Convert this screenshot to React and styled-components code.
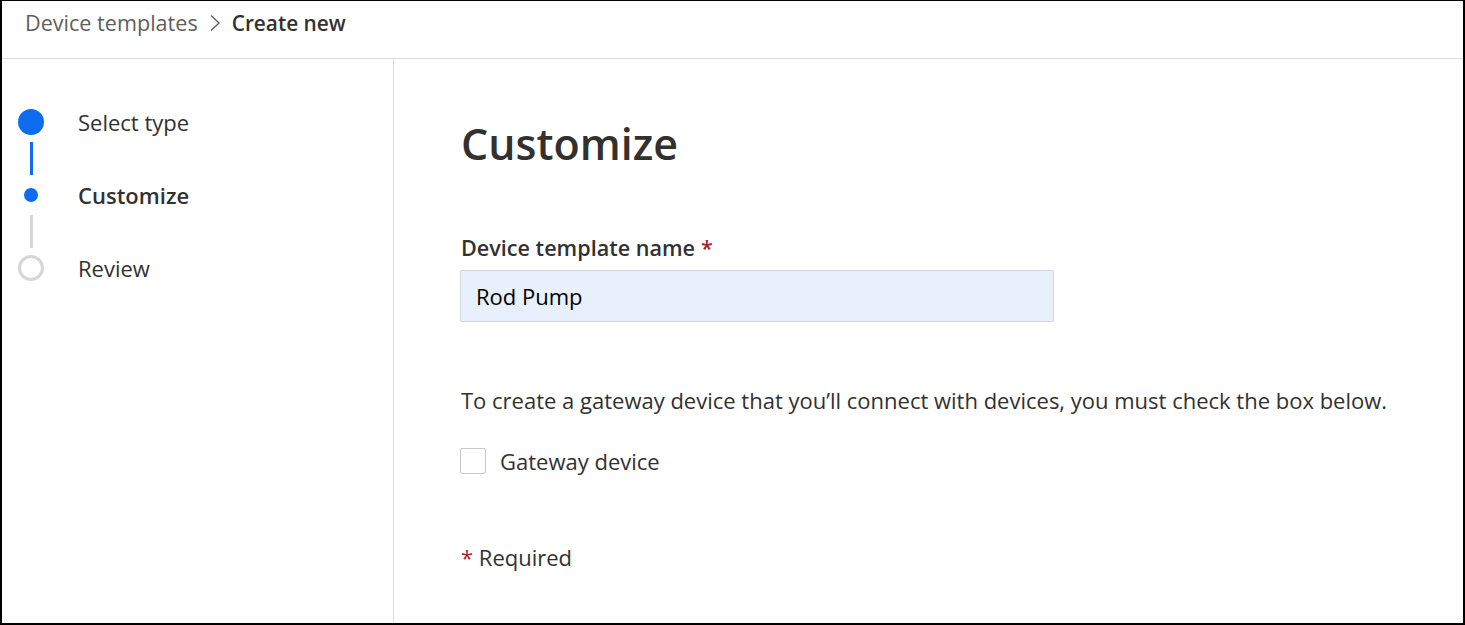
import React from 'react';
import styled, { createGlobalStyle } from 'styled-components';

const GlobalStyle = createGlobalStyle`
  html, body {
    margin: 0;
    padding: 0;
    background: #fff;
  }
  body {
    font-family: 'Open Sans', 'Noto Sans', sans-serif;
    color: #323130;
  }
`;

const Frame = styled.div`
  box-sizing: border-box;
  width: 1465px;
  height: 625px;
  border-style: solid;
  border-color: #000;
  border-width: 1px 2px 2px 2px;
  display: flex;
  flex-direction: column;
  overflow: hidden;
`;

const Header = styled.header`
  height: 57px;
  flex: none;
  display: flex;
  align-items: center;
  padding-left: 23px;
  border-bottom: 1px solid #dcdcdc;
  gap: 11px;
`;

const Crumb = styled.span`
  color: ${p => (p.current ? '#323130' : '#605e5c')};
  font-weight: ${p => (p.current ? 600 : 400)};
  font-size: ${p => (p.current ? '20.8px' : '21.6px')};
  margin-top: -14px;
`;

const Chevron = styled.svg`
  width: 12px;
  height: 18px;
  margin-top: -14px;
`;

const Body = styled.div`
  flex: 1;
  display: flex;
`;

const Sidebar = styled.nav`
  width: 392px;
  flex: none;
  border-right: 1px solid #dcdcdc;
  padding-top: 50px;
  box-sizing: border-box;
`;

const Step = styled.div`
  display: flex;
  align-items: center;
  height: 26px;
`;

const DotCell = styled.div`
  width: 26px;
  height: 26px;
  margin-left: 16px;
  display: flex;
  align-items: center;
  justify-content: center;
`;

const Dot = styled.div`
  box-sizing: border-box;
  border-radius: 50%;
  width: ${p => (p.size === 'small' ? '14px' : '26px')};
  height: ${p => (p.size === 'small' ? '14px' : '26px')};
  background: ${p => (p.hollow ? 'transparent' : '#0f6cf0')};
  border: ${p => (p.hollow ? '3px solid #d6d6d6' : 'none')};
`;

const StepLabel = styled.span`
  margin-left: 34px;
  font-size: 22px;
  font-weight: ${p => (p.active ? 600 : 400)};
  color: #323130;
`;

const Connector = styled.div`
  width: 3px;
  height: 33px;
  margin: 7px 0 7px 28px;
  background: ${p => (p.done ? '#0f6cf0' : '#d6d6d6')};
`;

const Main = styled.main`
  flex: 1;
  padding: 55px 0 0 67px;
`;

const Title = styled.h1`
  margin: 0;
  font-size: 43px;
  font-weight: 600;
  line-height: 60px;
  color: #323130;
`;

const Label = styled.label`
  display: block;
  margin-top: 61px;
  font-size: 21.6px;
  font-weight: 600;
  line-height: 26px;
`;

const Star = styled.span`
  color: #a4262c;
  margin-left: ${p => p.gap || '0px'};
`;

const Input = styled.input`
  display: block;
  box-sizing: border-box;
  margin: 9px 0 0 -1px;
  width: 594px;
  height: 52px;
  padding: 0 15px;
  background: #e8f0fe;
  border: 1px solid #d2d6dc;
  border-radius: 2px;
  font-family: inherit;
  font-size: 22px;
  color: #000;
  outline: none;
`;

const Text = styled.p`
  margin: 64px 0 0;
  font-size: 22px;
  line-height: 28px;
`;

const CheckRow = styled.label`
  display: flex;
  align-items: center;
  gap: 14px;
  margin: 32px 0 0 -1px;
  font-size: 22px;
`;

const Box = styled.span`
  box-sizing: border-box;
  width: 26px;
  height: 26px;
  border: 1px solid #c8c8c8;
  border-radius: 2px;
`;

const Required = styled.p`
  margin: 67px 0 0;
  font-size: 22px;
  line-height: 28px;
`;

const steps = [
  { label: 'Select type', state: 'done' },
  { label: 'Customize', state: 'active' },
  { label: 'Review', state: 'todo' },
];

export default function App() {
  return (
    <>
      <GlobalStyle />
      <Frame>
        <Header>
          <Crumb>Device templates</Crumb>
          <Chevron viewBox="0 0 12 18">
            <path d="M2 1.5 L10 9 L2 16.5" fill="none" stroke="#605e5c" strokeWidth="1.3" />
          </Chevron>
          <Crumb current>Create new</Crumb>
        </Header>
        <Body>
          <Sidebar>
            {steps.map((s, i) => (
              <React.Fragment key={s.label}>
                <Step>
                  <DotCell>
                    <Dot size={s.state === 'active' ? 'small' : 'big'} hollow={s.state === 'todo'} />
                  </DotCell>
                  <StepLabel active={s.state === 'active'}>{s.label}</StepLabel>
                </Step>
                {i < steps.length - 1 && <Connector done={s.state === 'done'} />}
              </React.Fragment>
            ))}
          </Sidebar>
          <Main>
            <Title>Customize</Title>
            <Label>
              Device template name<Star gap="6px">*</Star>
            </Label>
            <Input defaultValue="Rod Pump" />
            <Text>To create a gateway device that you’ll connect with devices, you must check the box below.</Text>
            <CheckRow>
              <Box />
              Gateway device
            </CheckRow>
            <Required>
              <Star>*</Star> Required
            </Required>
          </Main>
        </Body>
      </Frame>
    </>
  );
}
